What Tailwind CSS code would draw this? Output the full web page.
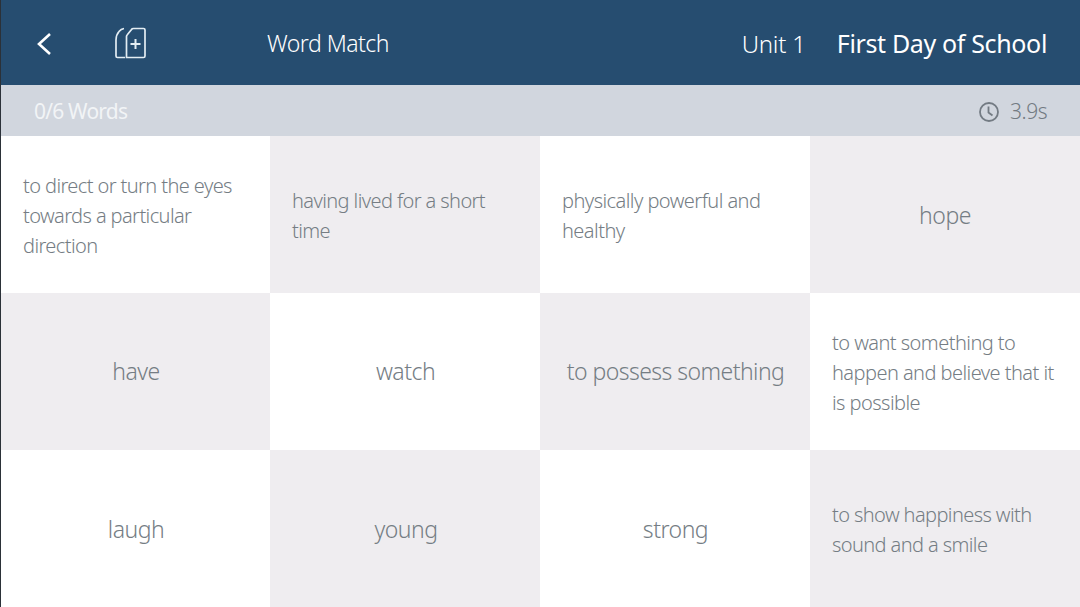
<!DOCTYPE html>
<html lang="en">
<head>
  <meta charset="UTF-8" />
  <title>Word Match</title>
  <script src="https://cdn.jsdelivr.net/npm/@tailwindcss/browser@4"></script>
</head>
<body class="h-[607px] w-[1080px] overflow-hidden border-l border-[#2b3138] bg-white font-['Noto_Sans',sans-serif] font-light text-[#6f767c]">

<div class="flex h-[85px] items-center bg-[#264d70] pl-[35px] pr-[33px] pt-[2px] text-white">
  <svg class="h-[24px] w-[16px]" viewBox="0 0 16 24" fill="none" stroke="currentColor" stroke-width="2.6"><path d="M14 2 L3 12 L14 22" /></svg>
  <svg class="ml-[62px] h-[34px] w-[34px] text-[#e3edf3]" viewBox="0 0 34 34" fill="none" stroke="currentColor" stroke-width="1.7">
    <path d="M11 30.500 H3.500 Q2 30.500 2 29 V13 Q2 8 5 4.500 Q7 2 10 1.500" />
    <path d="M12.500 30.500 V9.500 Q12.500 8.500 13.500 7.500 L17.500 2.500 Q18 1.500 19.500 1.500 H29.500 Q31 1.500 31 3 V29 Q31 30.500 29.500 30.500 Z" />
    <path d="M21.500 12 V22 M16.500 17 H26.500" stroke-width="2" />
  </svg>
  <span class="ml-[119px] text-[23px] tracking-[-0.5px]">Word Match</span>
  <span class="ml-auto text-[24px] tracking-[-0.2px]">Unit 1</span>
  <span class="ml-[31px] text-[25px] font-normal tracking-[-0.35px]">First Day of School</span>
</div>

<div class="flex h-[51px] items-center bg-[#d1d6de] pl-[33px] pr-[33px] pt-[2px]">
  <span class="text-[21px] font-normal tracking-[-0.8px] text-[#f2f4f6]">0/6 Words</span>
  <svg class="ml-auto h-[22px] w-[22px] text-[#737b83]" viewBox="0 0 22 22" fill="none" stroke="currentColor" stroke-width="1.800">
    <circle cx="11" cy="11" r="9" />
    <path d="M10.500 5.500 V11.500 L14.500 14.500" />
  </svg>
  <span class="ml-[10px] text-[21px] tracking-[-0.5px] text-[#737b83]">3.9s</span>
</div>

<div class="grid h-[471px] grid-cols-[269px_270px_270px_270px] grid-rows-[157px_157px_157px] text-[#757d84]">
  <div class="flex items-center bg-white pl-[22px] pr-[24px] pt-[2px] text-[20px] leading-[30px] tracking-[-0.6px]">to direct or turn the eyes towards a particular direction</div>
  <div class="flex items-center bg-[#efedf0] pl-[22px] pr-[24px] pt-[2px] text-[20px] leading-[30px] tracking-[-0.6px]">having lived for a short time</div>
  <div class="flex items-center bg-white pl-[22px] pr-[24px] pt-[2px] text-[20px] leading-[30px] tracking-[-0.55px]">physically powerful and healthy</div>
  <div class="flex items-center justify-center bg-[#efedf0] pt-[2px] text-[23px] tracking-[-0.5px]">hope</div>

  <div class="flex items-center justify-center bg-[#efedf0] pl-[1px] text-[23px] tracking-[-0.5px]">have</div>
  <div class="flex items-center justify-center bg-white pl-[1px] text-[23px] tracking-[-0.5px]">watch</div>
  <div class="flex items-center justify-center bg-[#efedf0] pl-[1px] text-[23px] tracking-[-0.55px]">to possess something</div>
  <div class="flex items-center bg-white pl-[22px] pr-[20px] pt-[2px] text-[20px] leading-[30px] tracking-[-0.55px]">to want something to happen and believe that it is possible</div>

  <div class="flex items-center justify-center bg-white pl-[1px] pt-[2px] text-[23px] tracking-[-0.5px]">laugh</div>
  <div class="flex items-center justify-center bg-[#efedf0] pl-[2px] pt-[2px] text-[23px] tracking-[-0.5px]">young</div>
  <div class="flex items-center justify-center bg-white pl-[1px] pt-[2px] text-[23px] tracking-[-0.5px]">strong</div>
  <div class="flex items-center bg-[#efedf0] pl-[22px] pr-[24px] pt-[2px] text-[20px] leading-[30px] tracking-[-0.6px]">to show happiness with sound and a smile</div>
</div>

</body>
</html>
